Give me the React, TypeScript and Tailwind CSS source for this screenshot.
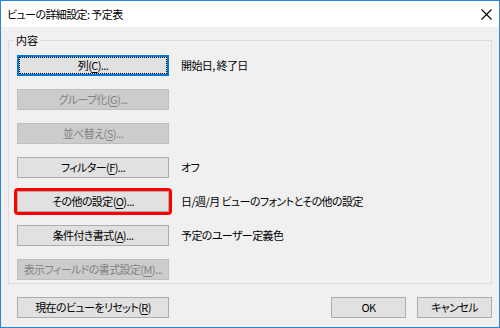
import type { ReactNode } from "react";

type BtnProps = {
    children: ReactNode;
    disabled?: boolean;
    focused?: boolean;
    highlight?: boolean;
    className?: string;
};

function DlgButton({ children, disabled, focused, highlight, className = "w-[152px]" }: BtnProps) {
    let look = "border border-[#adadad] bg-[#e1e1e1] text-black";
    if (disabled) look = "border border-[#bfbfbf] bg-[#cccccc] text-[#838383]";
    if (focused)
        look =
            "border-2 border-[#0078d7] bg-[#e1e1e1] text-black outline-1 outline-dotted outline-black -outline-offset-[3px]";
    return (
        <button
            type="button"
            disabled={disabled}
            className={`${className} h-[21px] shrink-0 flex items-center justify-center whitespace-nowrap text-[11px] tracking-[-0.6px] leading-none ${look} ${
                highlight ? "outline-[3px] outline-solid outline-[#ff0000] rounded-[1px]" : ""
            }`}
        >
            {children}
        </button>
    );
}

function Key({ k }: { k: string }) {
    return <u className="underline-offset-[2px]">{k}</u>;
}

const rows = [
    { label: <>列(<Key k="C" />)...</>, value: "開始日, 終了日", focused: true },
    { label: <>グループ化(<Key k="G" />)...</>, disabled: true },
    { label: <>並べ替え(<Key k="S" />)...</>, disabled: true },
    { label: <>フィルター(<Key k="F" />)...</>, value: "オフ" },
    { label: <>その他の設定(<Key k="O" />)...</>, value: "日/週/月 ビューのフォントとその他の設定", highlight: true },
    { label: <>条件付き書式(<Key k="A" />)...</>, value: "予定のユーザー定義色" },
    { label: <>表示フィールドの書式設定(<Key k="M" />)...</>, disabled: true },
];

export default function App() {
    return (
        <div className="w-[500px] h-[328px] border border-[#2b86d9] flex flex-col text-black bg-[#f0f0f0] font-['Noto_Sans_CJK_JP','Noto_Sans',sans-serif] [font-feature-settings:'palt']">
            {/* title bar */}
            <div className="h-[26px] bg-white flex items-center justify-between pl-[6px] pr-[7px]">
                <span className="text-[11px] tracking-[-0.6px] leading-none">ビューの詳細設定: 予定表</span>
                <svg width="11" height="11" viewBox="0 0 11 11" className="text-black">
                    <path d="M0.5 0.5 L10.5 10.5 M10.5 0.5 L0.5 10.5" stroke="currentColor" strokeWidth="1.1" />
                </svg>
            </div>

            <div className="flex-1 flex flex-col px-[7px]">
                <fieldset className="mt-[6px] border border-[#dcdcdc] px-[8px] pb-[3px]">
                    <legend className="-ml-[3px] px-[2px] text-[11px] leading-[14px]">内容</legend>
                    <div className="flex flex-col gap-[13px] pt-[8px]">
                        {rows.map((r, i) => (
                            <div key={i} className="flex items-center gap-[12px]">
                                <DlgButton disabled={r.disabled} focused={r.focused} highlight={r.highlight}>
                                    {r.label}
                                </DlgButton>
                                {r.value && (
                                    <span className="text-[11px] tracking-[-0.6px] leading-none whitespace-nowrap">
                                        {r.value}
                                    </span>
                                )}
                            </div>
                        ))}
                    </div>
                </fieldset>

                <div className="mt-[13px] flex items-center pl-[9px]">
                    <DlgButton>
                        現在のビューをリセット(<Key k="R" />)
                    </DlgButton>
                    <div className="ml-auto flex gap-[11px]">
                        <DlgButton className="w-[75px]">OK</DlgButton>
                        <DlgButton className="w-[75px]">キャンセル</DlgButton>
                    </div>
                </div>
            </div>
        </div>
    );
}
